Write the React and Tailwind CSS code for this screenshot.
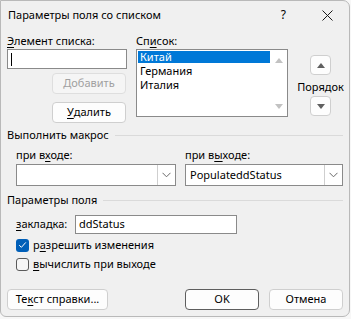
import React from "react";

const F = { fontFamily: '"Noto Sans", "Segoe UI", sans-serif' };

function U({ children }) {
  return <span className="underline underline-offset-[2px] decoration-[1px]">{children}</span>;
}

function Btn({ children, className = "", disabled = false, def = false }) {
  return (
    <div
      className={
        "flex items-center justify-center h-[21px] rounded-[4px] border text-[11px] " +
        (disabled
          ? "bg-[#f5f5f5] border-[#dedede] text-[#a0a0a0] "
          : def
          ? "bg-[#fdfdfd] border-[#5e5e5e] text-black "
          : "bg-[#fdfdfd] border-[#cfcfcf] text-black ") +
        className
      }
    >
      {children}
    </div>
  );
}

function Chevron() {
  return (
    <svg width="9" height="6" viewBox="0 0 9 6">
      <path d="M0.5 0.8 L4.5 4.8 L8.5 0.8" fill="none" stroke="#6a6a6a" strokeWidth="1" />
    </svg>
  );
}

function Combo({ value, className = "" }) {
  return (
    <div className={"flex h-[22px] bg-white border border-[#8a8a8a] " + className}>
      <div className="flex-1 flex items-center pl-[4px] text-[11px] text-black">{value}</div>
      <div className="w-[18px] flex items-center justify-center border-l border-[#cfcfcf]">
        <Chevron />
      </div>
    </div>
  );
}

function Tri({ up, color, w = 8, h = 5 }) {
  return (
    <svg width={w} height={h} viewBox={`0 0 ${w} ${h}`}>
      {up ? (
        <polygon points={`0,${h} ${w},${h} ${w / 2},0`} fill={color} />
      ) : (
        <polygon points={`0,0 ${w},0 ${w / 2},${h}`} fill={color} />
      )}
    </svg>
  );
}

function GroupHeader({ children }) {
  return (
    <div className="flex items-center h-[14px] pr-[6px]">
      <span className="text-[11px] leading-[14px] text-black whitespace-nowrap">{children}</span>
      <div className="flex-1 ml-[6px] h-[1px] bg-[#dadada]" />
    </div>
  );
}

export default function App() {
  return (
    <div className="w-[351px] h-[319px] bg-[#f7f7f7]" style={F}>
      <div className="w-[350px] h-[317px] bg-[#f0f0f0] border border-[#b9b9b9] rounded-[7px] rounded-tl-none rounded-bl-[6px] flex flex-col overflow-hidden">
        {/* title bar */}
        <div className="flex items-center h-[28px] pl-[7px] shrink-0">
          <span className="text-[11px] text-black leading-[14px]">Параметры поля со списком</span>
          <span className="ml-auto mr-[35px] text-[12px] text-black leading-[14px]">?</span>
          <div className="w-[12px] mr-[16px] flex items-center justify-center">
            <svg width="11" height="11" viewBox="0 0 11 11">
              <path d="M0.5 0.5 L10.5 10.5 M10.5 0.5 L0.5 10.5" stroke="#1a1a1a" strokeWidth="1" />
            </svg>
          </div>
        </div>

        {/* top section */}
        <div className="flex pl-[6px] mt-[4px]">
          <div className="w-[120px] flex flex-col">
            <div className="h-[15px] text-[11px] leading-[15px] text-black">
              <U>Э</U>лемент списка:
            </div>
            <div className="mt-[1px] h-[20px] bg-white border border-[#8a8a8a] flex items-center pl-[3px]">
              <div className="w-[1px] h-[13px] bg-black" />
            </div>
            <Btn disabled className="mt-[4px] ml-[45px] w-[74px]">Добавить</Btn>
            <Btn className="mt-[8px] ml-[45px] w-[74px]">
              <U>У</U>далить
            </Btn>
          </div>
          <div className="ml-[9px] w-[152px] flex flex-col">
            <div className="h-[15px] text-[11px] leading-[15px] text-black">
              Сп<U>и</U>сок:
            </div>
            <div className="mt-[1px] h-[68px] bg-white border border-[#8a8a8a] flex">
              <div className="flex-1 flex flex-col pt-[1px] pl-[1px]">
                <div className="h-[12px] bg-[#0078d7] text-white text-[11px] leading-[12px] pl-[2px]">Китай</div>
                <div className="h-[13px] text-black text-[11px] leading-[14px] pl-[2px] mt-[1px]">Германия</div>
                <div className="h-[13px] text-black text-[11px] leading-[14px] pl-[2px] mt-[1px]">Италия</div>
              </div>
              <div className="w-[17px] flex flex-col items-center justify-between pt-[8px] pb-[7px]">
                <Tri up color="#c2c2c2" w={8} h={5} />
                <Tri color="#c2c2c2" w={8} h={5} />
              </div>
            </div>
          </div>
          <div className="ml-[9px] w-[47px] flex flex-col items-center pt-[22px]">
            <div className="w-[21px] h-[20px] rounded-[4px] border border-[#cfcfcf] bg-[#fdfdfd] flex items-center justify-center">
              <Tri up color="#5f5f5f" w={8} h={5} />
            </div>
            <div className="h-[21px] text-[11px] leading-[23px] text-black">Порядок</div>
            <div className="w-[21px] h-[20px] rounded-[4px] border border-[#cfcfcf] bg-[#fdfdfd] flex items-center justify-center">
              <Tri color="#5f5f5f" w={8} h={5} />
            </div>
          </div>
        </div>

        {/* macro group */}
        <div className="pl-[6px] mt-[5px]">
          <GroupHeader>Выполнить макрос</GroupHeader>
          <div className="flex pl-[9px] mt-[6px] gap-[9px]">
            <div className="w-[160px] flex flex-col">
              <div className="h-[14px] text-[11px] leading-[14px] text-black">
                при в<U>х</U>оде:
              </div>
              <Combo value="" className="mt-[2px]" />
            </div>
            <div className="w-[158px] flex flex-col">
              <div className="h-[14px] text-[11px] leading-[14px] text-black">
                при в<U>ы</U>ходе:
              </div>
              <Combo value="PopulateddStatus" className="mt-[2px]" />
            </div>
          </div>
        </div>

        {/* field params group */}
        <div className="pl-[6px] mt-[7px]">
          <GroupHeader>Параметры поля</GroupHeader>
          <div className="pl-[9px] flex flex-col">
            <div className="flex items-center mt-[8px]">
              <div className="w-[59px] text-[11px] text-black">
                <U>з</U>акладка:
              </div>
              <div className="w-[162px] h-[19px] bg-white border border-[#8a8a8a] flex items-center pl-[3px] text-[11px] text-black">
                ddStatus
              </div>
            </div>
            <div className="flex items-center h-[14px] mt-[4px]">
              <div className="w-[13px] h-[13px] rounded-[3px] bg-[#005fb8] flex items-center justify-center">
                <svg width="9" height="8" viewBox="0 0 9 8">
                  <path d="M1.2 4.2 L3.4 6.3 L7.8 1.4" fill="none" stroke="#ffffff" strokeWidth="1" />
                </svg>
              </div>
              <span className="ml-[4px] text-[11px] text-black">
                р<U>а</U>зрешить изменения
              </span>
            </div>
            <div className="flex items-center h-[14px] mt-[5px]">
              <div className="w-[13px] h-[13px] rounded-[3px] border border-[#5a5a5a] bg-[#f6f6f6]" />
              <span className="ml-[4px] text-[11px] text-black">
                <U>в</U>ычислить при выходе
              </span>
            </div>
          </div>
        </div>

        {/* bottom buttons */}
        <div className="flex pl-[6px] mt-[18px]">
          <Btn className="w-[101px]">
            Те<U>к</U>ст справки...
          </Btn>
          <Btn def className="w-[74px] ml-[77px]">OK</Btn>
          <Btn className="w-[74px] ml-[10px]">Отмена</Btn>
        </div>
      </div>
    </div>
  );
}
